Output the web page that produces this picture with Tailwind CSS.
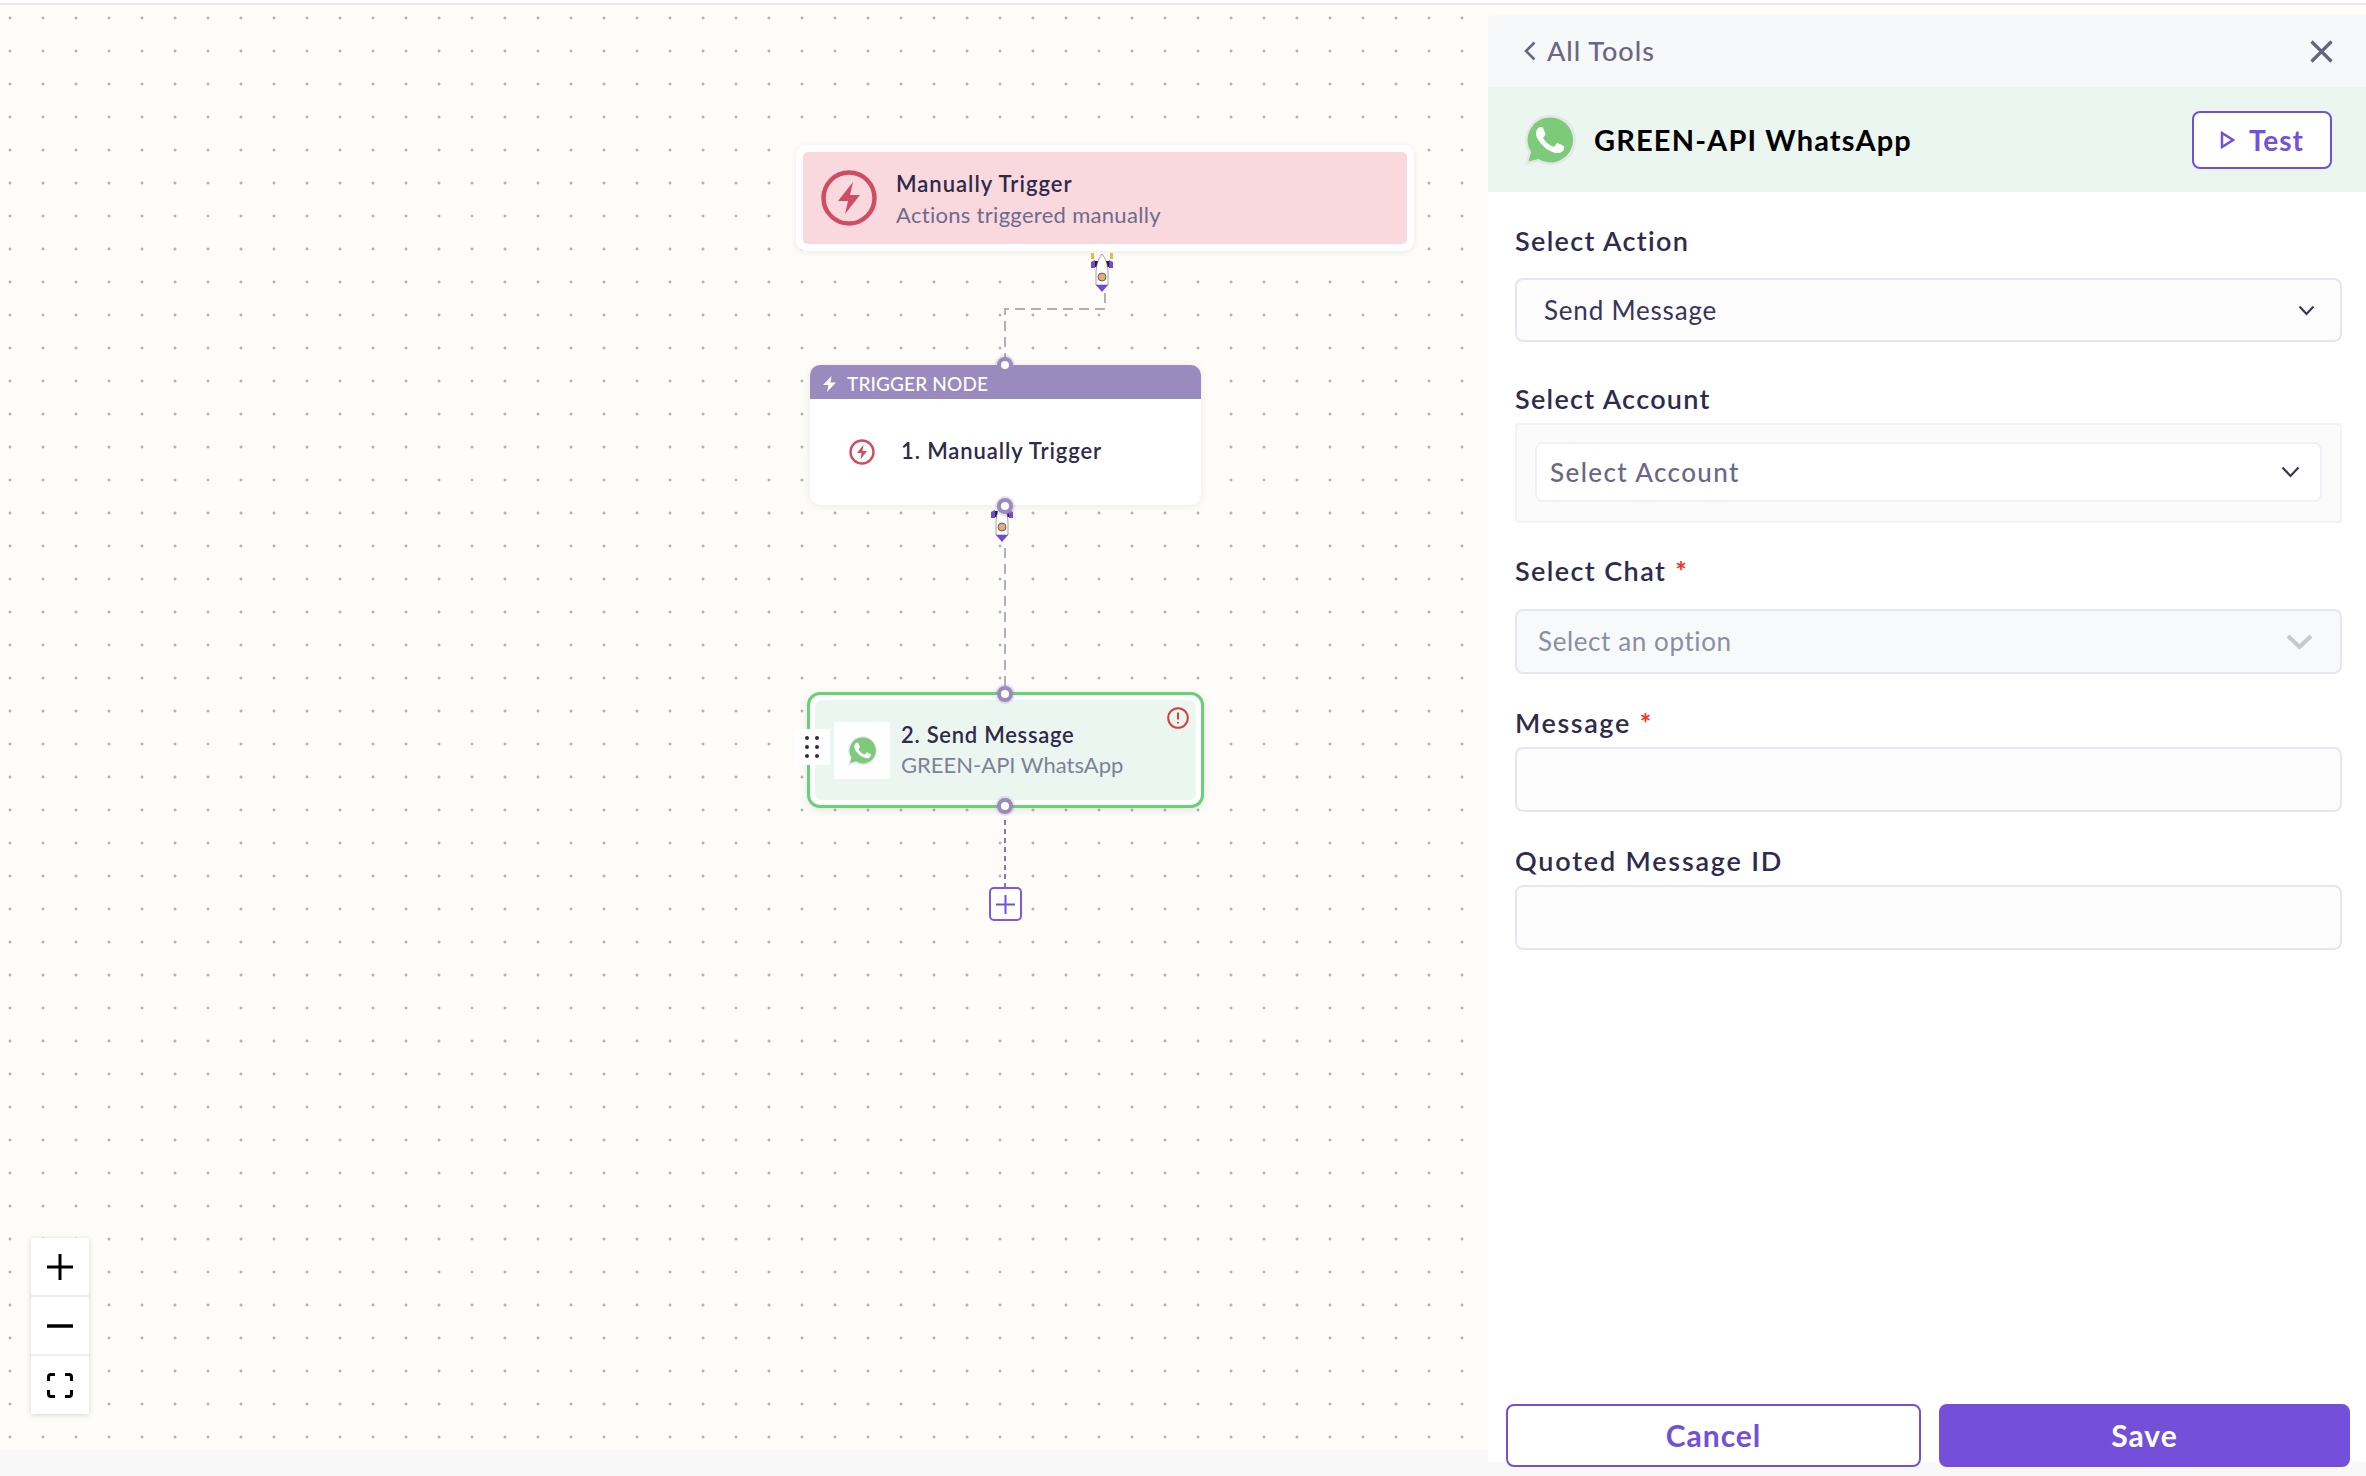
<!DOCTYPE html>
<html lang="en">
<head>
    <meta charset="UTF-8">
    <title>GREEN-API WhatsApp</title>
    <script src="https://cdn.jsdelivr.net/npm/@tailwindcss/browser@4"></script>
</head>
<body class="bg-[#f8f8f8] font-['Lato',sans-serif] overflow-hidden">
<div class="w-[2366px] h-[1476px] relative overflow-hidden">
    <!-- top rule -->
    <div class="h-[5px] bg-white border-b-2 border-[#e5e5ea]"></div>

    <!-- canvas + side panel -->
    <div class="relative h-[1444px] flex justify-end bg-[#fdfcf8] bg-[radial-gradient(circle,#8a8a90_0.9px,transparent_1.4px)] bg-[size:33px_33px] bg-[position:-6.5px_-3.5px]">

        <!-- edges -->
        <svg class="absolute left-0 top-0" width="1480" height="1000" fill="none" stroke-width="2">
            <path d="M1105 288V304H1005V354" stroke="#b1b1b7" stroke-dasharray="10 6"/>
            <path d="M1005 543V684" stroke="#b1b1b7" stroke-dasharray="10 6"/>
            <path d="M1005 815V882" stroke="#8a6fdc" stroke-dasharray="5 4"/>
        </svg>

        <!-- manual trigger card -->
        <div class="absolute left-[796px] top-[140px] w-[618px] h-[106px] p-[7px] bg-white rounded-[10px] shadow-[0_1px_6px_rgba(0,0,0,0.08)]">
            <div class="h-full bg-[#f9d9de] rounded-[5px] flex items-center pl-[18px] gap-[19px]">
                <svg width="56" height="56" viewBox="0 0 56 56" class="shrink-0">
                    <circle cx="28" cy="28" r="25.5" fill="none" stroke="#cf4d63" stroke-width="4.5"/>
                    <path d="M32 12L17 31H27L24 44L39 25H29Z" fill="#cf4d63"/>
                </svg>
                <div class="pt-[3px]">
                    <div class="text-[22px] leading-[30px] font-semibold text-[#2e2a4a] tracking-[1px]">Manually Trigger</div>
                    <div class="text-[22px] leading-[32px] text-[#6f6a8c] tracking-[0.3px]">Actions triggered manually</div>
                </div>
            </div>
        </div>

        <!-- rocket under first card -->
        <svg class="absolute left-[1090px] top-[248px]" width="24" height="40" viewBox="0 0 24 40">
            <rect x="1" y="0" width="3" height="6" fill="#e8b93a"/><rect x="20" y="0" width="3" height="6" fill="#e8b93a"/>
            <path d="M1 9L5 7V15H1ZM23 9L19 7V15H23Z" fill="#7048dc"/>
            <path d="M5 8H8V14H5ZM16 8H19V14H16Z" fill="#222"/>
            <path d="M12 1C8 6 6 12 6 22V32H18V22C18 12 16 6 12 1Z" fill="#fff" stroke="#666" stroke-width="0.6"/>
            <circle cx="12" cy="24" r="4" fill="#e2ac7c" stroke="#333" stroke-width="0.7"/>
            <path d="M6 32H18L12 39Z" fill="#7048dc"/>
        </svg>

        <!-- trigger node -->
        <div class="absolute left-[810px] top-[360px] w-[391px] h-[140px] bg-white rounded-[10px] shadow-[0_1px_8px_rgba(0,0,0,0.08)] overflow-hidden">
            <div class="h-[34px] bg-[#9a8abd] flex items-center pl-[12px] pt-[4px] gap-[10px] text-white text-[19px] tracking-[0.15px] font-medium">
                <svg width="15" height="16" viewBox="0 0 15 16"><path d="M9.5 0L1 9H6.5L5 16L14 6.5H8.5Z" fill="#fff"/></svg>
                <span>TRIGGER NODE</span>
            </div>
            <div class="h-[103px] flex items-center pl-[39px] gap-[26px]">
                <svg width="26" height="26" viewBox="0 0 26 26" class="shrink-0 mt-[3px]">
                    <circle cx="13" cy="13" r="11.5" fill="none" stroke="#cf4d63" stroke-width="2.4"/>
                    <path d="M14.5 5.5L8 14H12.5L11.5 20.5L18 12H13.5Z" fill="#cf4d63"/>
                </svg>
                <span class="text-[22px] font-semibold text-[#2e2a4a] tracking-[0.9px]">1. Manually Trigger</span>
            </div>
        </div>

        <!-- rocket under trigger node -->
        <svg class="absolute left-[990px] top-[498px]" width="24" height="40" viewBox="0 0 24 40">
            <path d="M1 9L5 7V15H1ZM23 9L19 7V15H23Z" fill="#7048dc"/>
            <path d="M5 8H8V14H5ZM16 8H19V14H16Z" fill="#222"/>
            <path d="M12 1C8 6 6 12 6 22V32H18V22C18 12 16 6 12 1Z" fill="#fff" stroke="#666" stroke-width="0.6"/>
            <circle cx="12" cy="24" r="4" fill="#e2ac7c" stroke="#333" stroke-width="0.7"/>
            <path d="M6 32H18L12 39Z" fill="#7048dc"/>
        </svg>

        <!-- send message node -->
        <div class="absolute left-[807px] top-[687px] w-[397px] h-[116px] p-[5px] bg-white border-[3px] border-[#66d275] rounded-[13px] shadow-[0_2px_8px_rgba(0,0,0,0.1)]">
            <div class="relative h-full bg-[#eaf6ef] rounded-[7px] flex items-center pl-[19px] gap-[11px]">
                <div class="w-[56px] h-[57px] bg-white flex items-center justify-center shrink-0">
                    <svg width="33" height="33" viewBox="0 0 24 24">
                        <path d="M12 1.5a10.5 10.5 0 0 0-9 15.8L1.5 22.7l5.6-1.4A10.5 10.5 0 1 0 12 1.5z" fill="#e9e9e9"/>
                        <path d="M12 2.6a9.4 9.4 0 0 0-8 14.4L3 21l4.2-1.1A9.4 9.4 0 1 0 12 2.6z" fill="#7bcb7b"/>
                        <path d="M17.472 14.382c-.297-.149-1.758-.867-2.03-.967-.273-.099-.471-.148-.67.15-.197.297-.767.966-.94 1.164-.173.199-.347.223-.644.075-.297-.15-1.255-.463-2.39-1.475-.883-.788-1.48-1.761-1.653-2.059-.173-.297-.018-.458.13-.606.134-.133.298-.347.446-.52.149-.174.198-.298.298-.497.099-.198.05-.371-.025-.52-.075-.149-.669-1.612-.916-2.207-.242-.579-.487-.5-.669-.51-.173-.008-.371-.01-.57-.01-.198 0-.52.074-.792.372-.272.297-1.04 1.016-1.04 2.479 0 1.462 1.065 2.875 1.213 3.074.149.198 2.096 3.2 5.077 4.487.709.306 1.262.489 1.694.625.712.227 1.36.195 1.871.118.571-.085 1.758-.719 2.006-1.413.248-.694.248-1.289.173-1.413-.074-.124-.272-.198-.57-.347z" fill="#fff"/>
                    </svg>
                </div>
                <div>
                    <div class="text-[22px] leading-[30px] font-semibold text-[#2e2a4a] tracking-[0.73px]">2. Send Message</div>
                    <div class="text-[22px] leading-[30px] text-[#7d8298]">GREEN-API WhatsApp</div>
                </div>
                <svg class="absolute right-[7px] top-[7px]" width="22" height="22" viewBox="0 0 22 22">
                    <circle cx="11" cy="11" r="9.8" fill="none" stroke="#cc4444" stroke-width="2"/>
                    <path d="M11 5.5V12.5M11 15V16.5" stroke="#cc4444" stroke-width="2" fill="none"/>
                </svg>
            </div>
        </div>

        <!-- drag handle -->
        <div class="absolute left-[794px] top-[724px] w-[36px] h-[36px] bg-white rounded-[2px] grid grid-cols-[4px_4px] gap-y-[5px] gap-x-[6px] place-content-center">
            <i class="block w-[4px] h-[4px] rounded-full bg-[#2e2a4a]"></i><i class="block w-[4px] h-[4px] rounded-full bg-[#2e2a4a]"></i>
            <i class="block w-[4px] h-[4px] rounded-full bg-[#2e2a4a]"></i><i class="block w-[4px] h-[4px] rounded-full bg-[#2e2a4a]"></i>
            <i class="block w-[4px] h-[4px] rounded-full bg-[#2e2a4a]"></i><i class="block w-[4px] h-[4px] rounded-full bg-[#2e2a4a]"></i>
        </div>

        <!-- connection handles -->
        <div class="absolute left-[997px] top-[352px] w-[16px] h-[16px] rounded-full bg-white border-[4px] border-[#9a8abd] shadow-[0_0_0_2px_rgba(154,138,189,0.25)]"></div>
        <div class="absolute left-[997px] top-[493px] w-[16px] h-[16px] rounded-full bg-white border-[4px] border-[#9a8abd] shadow-[0_0_0_2px_rgba(154,138,189,0.25)]"></div>
        <div class="absolute left-[997px] top-[681px] w-[16px] h-[16px] rounded-full bg-white border-[4px] border-[#9a8abd] shadow-[0_0_0_2px_rgba(154,138,189,0.25)]"></div>
        <div class="absolute left-[997px] top-[793px] w-[16px] h-[16px] rounded-full bg-white border-[4px] border-[#9a8abd] shadow-[0_0_0_2px_rgba(154,138,189,0.25)]"></div>

        <!-- add step -->
        <div class="absolute left-[989px] top-[882px] w-[33px] h-[34px] bg-white border-2 border-[#7a5be0] rounded-[5px] flex items-center justify-center">
            <svg width="19" height="19" viewBox="0 0 19 19"><path d="M9.5 0V19M0 9.5H19" stroke="#6f50dc" stroke-width="2"/></svg>
        </div>

        <!-- zoom controls -->
        <div class="absolute left-[31px] top-[1233px] w-[58px] bg-white shadow-[0_1px_5px_rgba(0,0,0,0.16)] flex flex-col">
            <div class="h-[59px] flex items-center justify-center border-b-2 border-[#eeeeee]">
                <svg width="26" height="26" viewBox="0 0 26 26"><path d="M13 0V26M0 13H26" stroke="#000" stroke-width="3"/></svg>
            </div>
            <div class="h-[59px] flex items-center justify-center border-b-2 border-[#eeeeee]">
                <svg width="26" height="4" viewBox="0 0 26 4"><path d="M0 2H26" stroke="#000" stroke-width="3.500"/></svg>
            </div>
            <div class="h-[58px] flex items-center justify-center">
                <svg width="26" height="25" viewBox="0 0 26 25" fill="none" stroke="#000" stroke-width="3"><path d="M8 1.5H4Q1.5 1.5 1.5 4V8M18 1.5H22Q24.500 1.500 24.500 4V8M8 23.500H4Q1.500 23.500 1.500 21V17M18 23.500H22Q24.500 23.500 24.500 21V17"/></svg>
            </div>
        </div>

        <!-- side panel -->
        <div class="relative mt-[10px] w-[878px] h-[1447px] bg-white flex flex-col shrink-0">
            <div class="h-[72px] shrink-0 bg-[#f7f8fa] rounded-tl-[4px] flex items-center justify-between pl-[36px] pr-[33px]">
                <div class="flex items-center gap-[11px] text-[27px] font-medium text-[#6a6785] tracking-[1px]">
                    <svg width="12" height="20" viewBox="0 0 12 20" fill="none" stroke="#6a6785" stroke-width="2.6"><path d="M10.500 1.500L2 10L10.500 18.500"/></svg>
                    <span>All Tools</span>
                </div>
                <svg width="23" height="23" viewBox="0 0 23 23" fill="none" stroke="#66637f" stroke-width="3.2"><path d="M1.500 1.500L21.500 21.500M21.500 1.500L1.500 21.500"/></svg>
            </div>
            <div class="h-[105px] shrink-0 bg-[#eaf6ef] flex items-center pl-[34px] pr-[34px]">
                <svg width="56" height="56" viewBox="0 0 24 24" class="shrink-0">
                    <path d="M12 1.200a10.800 10.800 0 0 0-9.200 16.300L1.200 22.800l5.700-1.500A10.800 10.800 0 1 0 12 1.200z" fill="#e6e6e6"/>
                    <path d="M12 2.400a9.600 9.600 0 0 0-8.100 14.700L2.800 21.200l4.300-1.100A9.600 9.600 0 1 0 12 2.400z" fill="#7bcb7b"/>
                    <path d="M17.472 14.382c-.297-.149-1.758-.867-2.03-.967-.273-.099-.471-.148-.67.15-.197.297-.767.966-.94 1.164-.173.199-.347.223-.644.075-.297-.15-1.255-.463-2.39-1.475-.883-.788-1.48-1.761-1.653-2.059-.173-.297-.018-.458.13-.606.134-.133.298-.347.446-.52.149-.174.198-.298.298-.497.099-.198.05-.371-.025-.52-.075-.149-.669-1.612-.916-2.207-.242-.579-.487-.5-.669-.51-.173-.008-.371-.01-.57-.01-.198 0-.52.074-.792.372-.272.297-1.04 1.016-1.04 2.479 0 1.462 1.065 2.875 1.213 3.074.149.198 2.096 3.2 5.077 4.487.709.306 1.262.489 1.694.625.712.227 1.36.195 1.871.118.571-.085 1.758-.719 2.006-1.413.248-.694.248-1.289.173-1.413-.074-.124-.272-.198-.57-.347z" fill="#fff"/>
                </svg>
                <span class="ml-[16px] text-[29px] font-bold text-black tracking-[1.15px]">GREEN-API WhatsApp</span>
                <button class="ml-auto w-[140px] h-[58px] bg-white border-[2.5px] border-[#6f50dc] rounded-[8px] flex items-center justify-center gap-[14px] text-[28px] font-bold text-[#7350dd] tracking-[1px]">
                    <svg width="15" height="18" viewBox="0 0 15 18" fill="none" stroke="#6f50dc" stroke-width="2.4"><path d="M2 2L13 9L2 16Z"/></svg>
                    <span>Test</span>
                </button>
            </div>

            <form class="flex-1 flex flex-col pl-[27px] pr-[24px] pt-[31px]">
                <label class="h-[36px] leading-[36px] text-[27px] font-semibold text-[#2f2b4d] tracking-[1.35px]">Select Action</label>
                <div class="mt-[19px] h-[64px] bg-[#fcfcfd] border-2 border-[#e6e6ee] rounded-[8px] flex items-center justify-between pl-[27px] pr-[25px] text-[26px] text-[#38345a] tracking-[0.8px]">
                    <span>Send Message</span>
                    <svg width="17" height="11" viewBox="0 0 17 11" fill="none" stroke="#38345a" stroke-width="2"><path d="M1.500 1.500L8.500 9L15.500 1.500"/></svg>
                </div>

                <label class="mt-[39px] h-[36px] leading-[36px] text-[27px] font-semibold text-[#2f2b4d] tracking-[1.3px]">Select Account</label>
                <div class="mt-[6px] h-[100px] bg-[#fbfbfc] border-2 border-[#f3f3f6] rounded-[4px] px-[18px] pt-[17px]">
                    <div class="h-[60px] bg-white border-2 border-[#f1f1f5] rounded-[8px] flex items-center justify-between pl-[13px] pr-[20px] text-[26px] font-medium text-[#6a6785] tracking-[1.4px]">
                        <span>Select Account</span>
                        <svg width="19" height="12" viewBox="0 0 19 12" fill="none" stroke="#38345a" stroke-width="2.200"><path d="M1.500 1.500L9.500 10L17.500 1.500"/></svg>
                    </div>
                </div>

                <label class="mt-[30px] h-[36px] leading-[36px] text-[27px] font-semibold text-[#2f2b4d] tracking-[1.4px]">Select Chat<span class="ml-[9px] font-bold text-[#ee3322]">*</span></label>
                <div class="mt-[20px] h-[65px] bg-[#f8f9fb] border-2 border-[#e6e6ee] rounded-[8px] flex items-center justify-between pl-[21px] pr-[27px] text-[26px] text-[#8a8fa3] tracking-[0.6px]">
                    <span>Select an option</span>
                    <svg width="27" height="15" viewBox="0 0 27 15" fill="none" stroke="#c8c8c8" stroke-width="4"><path d="M2 2L13.500 13L25 2"/></svg>
                </div>

                <label class="mt-[31px] h-[36px] leading-[36px] text-[27px] font-semibold text-[#2f2b4d] tracking-[1.6px]">Message<span class="ml-[9px] font-bold text-[#ee3322]">*</span></label>
                <div class="mt-[6px] h-[65px] bg-[#fcfcfd] border-2 border-[#e6e6ee] rounded-[8px]"></div>

                <label class="mt-[31px] h-[36px] leading-[36px] text-[27px] font-semibold text-[#2f2b4d] tracking-[1.8px]">Quoted Message ID</label>
                <div class="mt-[6px] h-[65px] bg-[#fcfcfd] border-2 border-[#e6e6ee] rounded-[8px]"></div>
            </form>

            <div class="absolute left-[18px] top-[1389px] w-[844px] flex gap-[18px]">
                <button class="flex-1 h-[63px] bg-white border-2 border-[#744fd9] rounded-[8px] text-[30px] font-bold text-[#744fd9] tracking-[1px]">Cancel</button>
                <button class="flex-1 h-[63px] bg-[#744fd9] rounded-[8px] text-[30px] font-bold text-white tracking-[1px]">Save</button>
            </div>
        </div>
    </div>
</div>
</body>
</html>
